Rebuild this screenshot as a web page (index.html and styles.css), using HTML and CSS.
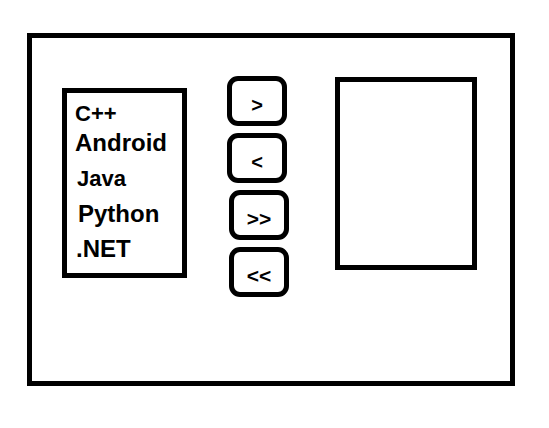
FILE: index.html
```html
<!DOCTYPE html>
<html lang="en">
<head>
	<meta charset="UTF-8">
	<meta name="viewport" content="width=device-width, initial-scale=1.0">
	<title>Lijst kiezen</title>
	<link rel="stylesheet" href="styles.css">
</head>
<body>
	<div class="frame">
		<div class="list">
			<span class="lang cpp">C++</span>
			<span class="lang android">Android</span>
			<span class="lang java">Java</span>
			<span class="lang python">Python</span>
			<span class="lang net">.NET</span>
		</div>
		<div class="controls">
			<button class="btn">&gt;</button>
			<button class="btn">&lt;</button>
			<button class="btn wide">&gt;&gt;</button>
			<button class="btn wide">&lt;&lt;</button>
		</div>
		<div class="target"></div>
	</div>
</body>
</html>
```

FILE: styles.css
```css
body {
	margin: 0;
	background-color: #fff;
	font-family: "Liberation Sans", Arial, sans-serif;
	color: #000;
}

.frame {
	box-sizing: border-box;
	width: 488px;
	height: 353px;
	margin: 33px 0 0 27px;
	border: 5px solid #000;
	display: flex;
	align-items: flex-start;
}

.list {
	box-sizing: border-box;
	width: 125px;
	height: 190px;
	margin: 50px 0 0 30px;
	padding: 10px 0 0 8px;
	border: 5px solid #000;
}
.lang {
	display: block;
	font-weight: bold;
	line-height: 1;
}
.cpp { font-size: 22px; }
.android { font-size: 24px; margin-top: 6px; }
.java { font-size: 22px; margin-top: 13px; padding-left: 2px; }
.python { font-size: 24px; margin-top: 12px; padding-left: 3px; }
.net { font-size: 24px; margin-top: 11px; padding-left: 1px; }

.controls {
	margin: 38px 0 0 40px;
	display: flex;
	flex-direction: column;
	gap: 7px;
}
.btn {
	box-sizing: border-box;
	width: 60px;
	height: 50px;
	padding: 9px 0 0;
	border: 5px solid #000;
	border-radius: 11px;
	background-color: #fff;
	color: #000;
	font-family: "Liberation Sans", Arial, sans-serif;
	font-size: 20px;
	font-weight: bold;
}
.wide {
	margin-left: 2px;
	padding-top: 7px;
	font-size: 21px;
}

.target {
	box-sizing: border-box;
	width: 142px;
	height: 193px;
	margin: 39px 0 0 46px;
	border: 5px solid #000;
}
```
